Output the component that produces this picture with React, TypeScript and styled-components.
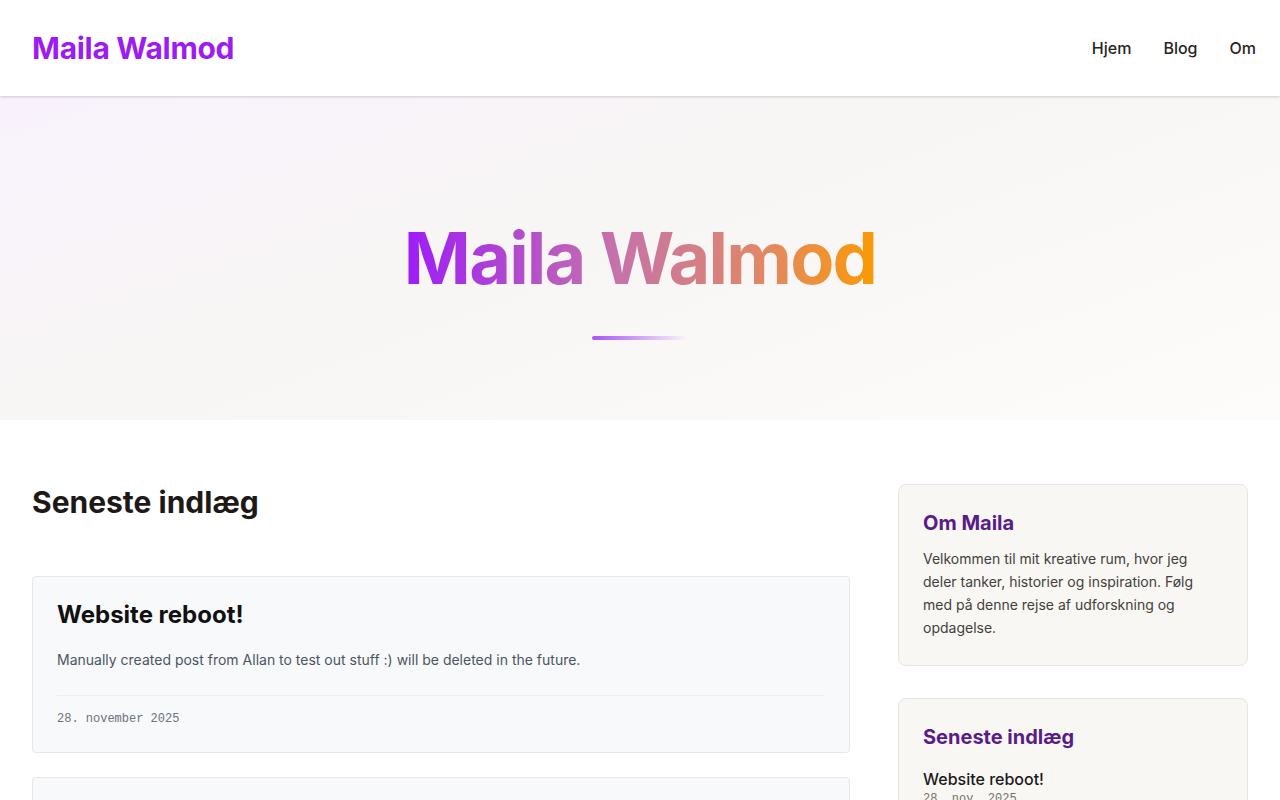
import React from "react";
import styled, { createGlobalStyle } from "styled-components";

const Global = createGlobalStyle`
  * { box-sizing: border-box; }
  html, body { margin: 0; padding: 0; background: #ffffff; }
  body { font-family: Inter, "Noto Sans", sans-serif; color: #1c1917; -webkit-font-smoothing: antialiased; }
  h1, h2, h3, p { margin: 0; }
  a { text-decoration: none; color: inherit; }
`;

const Header = styled.header`
  height: 96px;
  display: flex;
  align-items: center;
  justify-content: space-between;
  padding: 0 24px 0 32px;
  background: #ffffff;
  box-shadow: 0 1px 3px rgba(0, 0, 0, 0.12), 0 1px 2px rgba(0, 0, 0, 0.06);
  position: relative;
  z-index: 1;
`;

const Logo = styled.a`
  font-size: 30px;
  font-weight: 700;
  color: #9d1cf2;
  letter-spacing: -0.3px;
`;

const Nav = styled.nav`
  display: flex;
  gap: 32px;
`;

const NavLink = styled.a`
  font-size: 16px;
  font-weight: 500;
  color: #292524;
`;

const Hero = styled.section`
  display: flex;
  flex-direction: column;
  align-items: center;
  padding: 119px 32px 80px;
  background: linear-gradient(160deg, #f9f2fd 0%, #f8f6f4 45%, #fdfcfb 100%);
`;

const HeroTitle = styled.h1`
  font-size: 72px;
  line-height: 1.2;
  font-weight: 700;
  letter-spacing: -1.8px;
  background: linear-gradient(90deg, #9d1cf7 0%, #c573aa 45%, #e0876a 75%, #fb9a04 100%);
  -webkit-background-clip: text;
  background-clip: text;
  color: transparent;
`;

const HeroBar = styled.div`
  margin-top: 35px;
  width: 96px;
  height: 4px;
  border-radius: 2px;
  background: linear-gradient(90deg, #a855f7 0%, rgba(168, 85, 247, 0) 100%);
`;

const Main = styled.main`
  display: grid;
  grid-template-columns: 1fr 350px;
  gap: 48px;
  padding: 64px 32px 0;
  max-width: 1280px;
`;

const PostsColumn = styled.div`
  display: flex;
  flex-direction: column;
`;

const SectionTitle = styled.h2`
  font-size: 30px;
  line-height: 36px;
  font-weight: 700;
  color: #1c1917;
  margin-bottom: 56px;
`;

const PostList = styled.div`
  display: flex;
  flex-direction: column;
  gap: 24px;
`;

const PostCard = styled.article`
  background: #f8f9fa;
  border: 1px solid #e5e7eb;
  border-radius: 4px;
  padding: 24px;
`;

const PostTitle = styled.h3`
  font-size: 24px;
  line-height: 1.2;
  font-weight: 700;
  color: #111111;
`;

const PostExcerpt = styled.p`
  margin-top: 18px;
  font-size: 14px;
  line-height: 24px;
  color: #4b5563;
`;

const PostMeta = styled.div`
  margin-top: 23px;
  padding-top: 14px;
  border-top: 1px solid #eceef1;
  font-family: "Liberation Mono", "DejaVu Sans Mono", monospace;
  font-size: 12px;
  line-height: 18px;
  color: #6b7280;
`;

const Sidebar = styled.aside`
  display: flex;
  flex-direction: column;
  gap: 32px;
`;

const SideCard = styled.div`
  background: #f8f7f4;
  border: 1px solid #e7e5e4;
  border-radius: 8px;
  padding: 24px;
`;

const SideTitle = styled.h3`
  font-size: 20px;
  line-height: 28px;
  font-weight: 700;
  color: #581c87;
  margin-bottom: 11px;
`;

const SideText = styled.p`
  font-size: 14px;
  line-height: 22.8px;
  color: #44403c;
  padding-right: 4px;
  margin-bottom: 1px;
`;

const SidePost = styled.a`
  display: block;
  margin-top: 17px;
  font-size: 16px;
  line-height: 22px;
  font-weight: 500;
  color: #1c1917;
`;

const SideDate = styled.div`
  font-family: "Liberation Mono", "DejaVu Sans Mono", monospace;
  font-size: 12px;
  line-height: 18px;
  color: #78716c;
`;

const posts = [
  {
    title: "Website reboot!",
    excerpt: "Manually created post from Allan to test out stuff :) will be deleted in the future.",
    date: "28. november 2025",
  },
  {
    title: "Velkommen til min blog",
    excerpt: "Det første indlæg på min nye blog.",
    date: "20. november 2025",
  },
];

export default function App() {
  return (
    <>
      <Global />
      <Header>
        <Logo href="#">Maila Walmod</Logo>
        <Nav>
          <NavLink href="#">Hjem</NavLink>
          <NavLink href="#">Blog</NavLink>
          <NavLink href="#">Om</NavLink>
        </Nav>
      </Header>
      <Hero>
        <HeroTitle>Maila Walmod</HeroTitle>
        <HeroBar />
      </Hero>
      <Main>
        <PostsColumn>
          <SectionTitle>Seneste indlæg</SectionTitle>
          <PostList>
            {posts.map((p) => (
              <PostCard key={p.title}>
                <PostTitle>{p.title}</PostTitle>
                <PostExcerpt>{p.excerpt}</PostExcerpt>
                <PostMeta>{p.date}</PostMeta>
              </PostCard>
            ))}
          </PostList>
        </PostsColumn>
        <Sidebar>
          <SideCard>
            <SideTitle>Om Maila</SideTitle>
            <SideText>
              Velkommen til mit kreative rum, hvor jeg deler tanker, historier og inspiration. Følg med på denne rejse
              af udforskning og opdagelse.
            </SideText>
          </SideCard>
          <SideCard>
            <SideTitle>Seneste indlæg</SideTitle>
            <SidePost href="#">Website reboot!</SidePost>
            <SideDate>28. nov. 2025</SideDate>
          </SideCard>
        </Sidebar>
      </Main>
    </>
  );
}
